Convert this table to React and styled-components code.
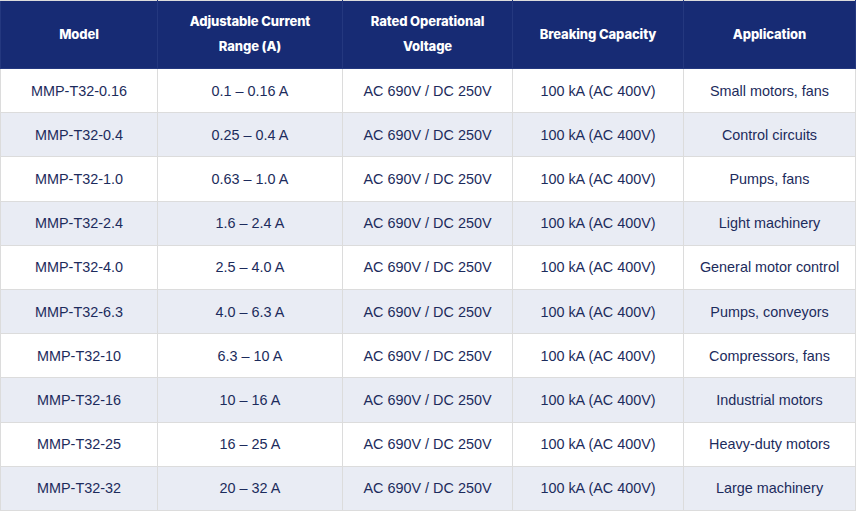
import React from 'react'
import styled, { createGlobalStyle } from 'styled-components'

const GlobalStyle = createGlobalStyle`
  html, body {
    margin: 0;
    padding: 0;
    background: #ffffff;
  }
`

const Table = styled.table`
  width: 855px;
  border-collapse: collapse;
  font-family: 'Liberation Sans', Arial, sans-serif;
  table-layout: fixed;
`

const HeadCell = styled.th`
  background: #172b74;
  color: #ffffff;
  font-family: 'Inter', 'Open Sans', sans-serif;
  font-weight: 800;
  font-size: 13px;
  line-height: 25px;
  letter-spacing: -0.1px;
  height: 50px;
  padding: 8px 12px 9px;
  text-align: center;
  vertical-align: middle;
  border: 1px solid #24387f;
  border-top-color: #dcdcdc;
`

const Row = styled.tr`
  background: ${({ $alt }) => ($alt ? '#e9ecf4' : '#ffffff')};
`

const Cell = styled.td`
  height: 43.2px;
  padding: 0 8px;
  text-align: center;
  vertical-align: middle;
  font-size: 14.4px;
  color: #1c2b5c;
  border: 1px solid #dcdcdc;
`

const columns = [
  { label: 'Model', width: 157 },
  { label: 'Adjustable Current Range (A)', width: 185 },
  { label: 'Rated Operational Voltage', width: 170 },
  { label: 'Breaking Capacity', width: 171 },
  { label: 'Application', width: 172 },
]

const rows = [
  ['MMP-T32-0.16', '0.1 – 0.16 A', 'Small motors, fans'],
  ['MMP-T32-0.4', '0.25 – 0.4 A', 'Control circuits'],
  ['MMP-T32-1.0', '0.63 – 1.0 A', 'Pumps, fans'],
  ['MMP-T32-2.4', '1.6 – 2.4 A', 'Light machinery'],
  ['MMP-T32-4.0', '2.5 – 4.0 A', 'General motor control'],
  ['MMP-T32-6.3', '4.0 – 6.3 A', 'Pumps, conveyors'],
  ['MMP-T32-10', '6.3 – 10 A', 'Compressors, fans'],
  ['MMP-T32-16', '10 – 16 A', 'Industrial motors'],
  ['MMP-T32-25', '16 – 25 A', 'Heavy-duty motors'],
  ['MMP-T32-32', '20 – 32 A', 'Large machinery'],
]

export default function App() {
  return (
    <>
      <GlobalStyle />
      <Table>
        <colgroup>
          {columns.map((c) => (
            <col key={c.label} style={{ width: c.width }} />
          ))}
        </colgroup>
        <thead>
          <tr>
            {columns.map((c) => (
              <HeadCell key={c.label}>{c.label}</HeadCell>
            ))}
          </tr>
        </thead>
        <tbody>
          {rows.map(([model, range, app], i) => (
            <Row key={model} $alt={i % 2 === 1}>
              <Cell>{model}</Cell>
              <Cell>{range}</Cell>
              <Cell>AC 690V / DC 250V</Cell>
              <Cell>100 kA (AC 400V)</Cell>
              <Cell>{app}</Cell>
            </Row>
          ))}
        </tbody>
      </Table>
    </>
  )
}
